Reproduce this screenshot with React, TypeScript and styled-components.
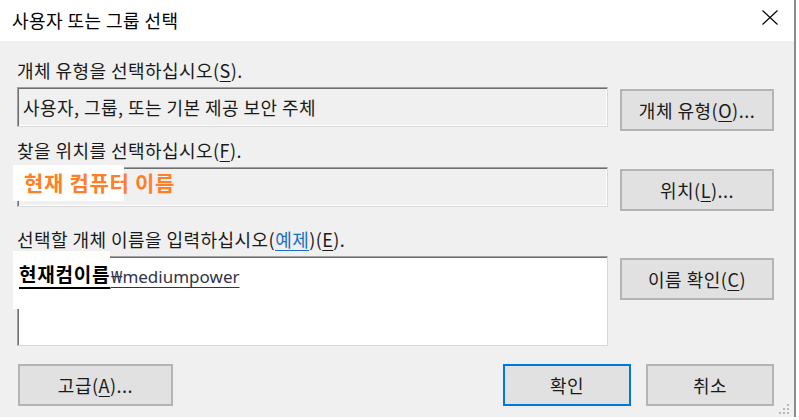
import React from "react";
import styled, { createGlobalStyle } from "styled-components";

const GlobalStyle = createGlobalStyle`
  html, body {
    margin: 0;
    padding: 0;
    background: #ffffff;
  }
  body {
    font-family: "Noto Sans CJK KR", "Noto Sans", sans-serif;
  }
`;

const Window = styled.div`
  position: relative;
  width: 794px;
  height: 417px;
  display: flex;
  flex-direction: column;
  border-right: 2px solid #8c8c8c;
  background: #f0f0f0;
  font-family: "Noto Sans CJK KR", sans-serif;
  color: #1a1a1a;
  letter-spacing: 0.45px;
`;

const TitleBar = styled.div`
  flex: 0 0 41px;
  height: 41px;
  box-sizing: border-box;
  background: #ffffff;
  display: flex;
  align-items: center;
  justify-content: space-between;
  padding: 0 16px 0 12px;
`;

const Title = styled.span`
  font-size: 18px;
  line-height: 24px;
  color: #000;
  margin-top: -2px;
`;

const CloseIcon = styled.svg`
  display: block;
  align-self: flex-start;
  margin-top: 10px;
`;

const Body = styled.div`
  flex: 1;
  display: flex;
  flex-direction: column;
  padding: 0 20px 0 17px;
`;

const Section = styled.div<{ $mt: number }>`
  margin-top: ${(p) => p.$mt}px;
  display: flex;
  flex-direction: column;
`;

const Label = styled.div`
  font-size: 18px;
  line-height: 24px;
  height: 24px;
  margin-bottom: 5px;
  white-space: nowrap;
`;

const Row = styled.div`
  display: flex;
  gap: 12px;
  align-items: flex-start;
`;

const Field = styled.div<{ $multi?: boolean }>`
  box-sizing: border-box;
  flex: 0 0 591px;
  width: 591px;
  height: ${(p) => (p.$multi ? 90 : 40)}px;
  background: ${(p) => (p.$multi ? "#ffffff" : "#f0f0f0")};
  border: 1px solid #a0a0a0;
  border-right-color: #d8d8d8;
  border-bottom-color: #d8d8d8;
  box-shadow: inset 1px 1px 0 #6e6e6e, inset -1px -1px 0 #ffffff;
  display: flex;
  align-items: ${(p) => (p.$multi ? "flex-start" : "center")};
  padding: ${(p) => (p.$multi ? "8px 2px 0" : "0 5px")};
  font-size: 18px;
  line-height: 24px;
  white-space: nowrap;
`;

const Resolved = styled.span<{ $indent: number }>`
  margin-left: ${(p) => p.$indent}px;
  font-family: "Noto Sans", "Noto Sans CJK KR", sans-serif;
  font-size: 17px;
  letter-spacing: 0;
  color: #33334a;
  text-decoration: underline;
  text-underline-offset: 4px;
`;

const Button = styled.button<{ $w: number; $primary?: boolean; $mt?: number }>`
  box-sizing: border-box;
  flex: 0 0 ${(p) => p.$w}px;
  width: ${(p) => p.$w}px;
  height: 42px;
  margin-top: ${(p) => p.$mt ?? 0}px;
  padding: 0;
  background: #e1e1e1;
  border: 2px solid ${(p) => (p.$primary ? "#0078d7" : "#b4b4b4")};
  font-family: "Noto Sans CJK KR", sans-serif;
  font-size: 18px;
  letter-spacing: 0.5px;
  color: #1a1a1a;
  display: flex;
  align-items: center;
  justify-content: center;
  white-space: nowrap;
`;

const Key = styled.span`
  text-decoration: underline;
  text-underline-offset: 3px;
`;

const Link = styled.span`
  color: #1a6fc4;
  text-decoration: underline;
  text-underline-offset: 3px;
`;

const Footer = styled.div`
  margin-top: 18px;
  padding-left: 1px;
  display: flex;
  gap: 15px;
`;

const Spacer = styled.div`
  flex: 1;
`;

const Mask = styled.div<{ $x: number; $y: number; $w: number; $h: number }>`
  position: absolute;
  left: ${(p) => p.$x}px;
  top: ${(p) => p.$y}px;
  width: ${(p) => p.$w}px;
  height: ${(p) => p.$h}px;
  background: #ffffff;
  box-sizing: border-box;
  white-space: nowrap;
`;

const OrangeText = styled.span`
  position: absolute;
  left: 11px;
  top: 3px;
  font-size: 21px;
  line-height: 28px;
  font-weight: 700;
  letter-spacing: 0.7px;
  color: #ff7f27;
`;

const NameText = styled.span`
  position: absolute;
  left: 6px;
  top: 11px;
  font-size: 19px;
  line-height: 24px;
  font-weight: 700;
  letter-spacing: 0.8px;
  color: #000;
  text-decoration: underline;
  text-decoration-thickness: 1.5px;
  text-underline-offset: 5px;
`;

const Grip = styled.svg`
  position: absolute;
  left: 778px;
  top: 403px;
`;

export default function App() {
  return (
    <>
      <GlobalStyle />
      <Window>
        <TitleBar>
          <Title>사용자 또는 그룹 선택</Title>
          <CloseIcon width="16" height="15" viewBox="0 0 16 15">
            <path d="M0.5 0.5 L15.5 14.5 M15.5 0.5 L0.5 14.5" stroke="#000" strokeWidth="1.1" fill="none" />
          </CloseIcon>
        </TitleBar>
        <Body>
          <Section $mt={17}>
            <Label>
              개체 유형을 선택하십시오(<Key>S</Key>).
            </Label>
            <Row>
              <Field>사용자, 그룹, 또는 기본 제공 보안 주체</Field>
              <Button $w={154} $mt={2}>
                개체 유형(<Key>O</Key>)...
              </Button>
            </Row>
          </Section>
          <Section $mt={7}>
            <Label>
              찾을 위치를 선택하십시오(<Key>F</Key>).
            </Label>
            <Row>
              <Field />
              <Button $w={154} $mt={2}>
                위치(<Key>L</Key>)...
              </Button>
            </Row>
          </Section>
          <Section $mt={16}>
            <Label>
              선택할 개체 이름을 입력하십시오(<Link>예제</Link>)(<Key>E</Key>).
            </Label>
            <Row>
              <Field $multi>
                <Resolved $indent={91}>₩mediumpower</Resolved>
              </Field>
              <Button $w={154} $mt={2}>
                이름 확인(<Key>C</Key>)
              </Button>
            </Row>
          </Section>
          <Footer>
            <Button $w={155}>
              고급(<Key>A</Key>)...
            </Button>
            <Spacer />
            <Button $w={128} $primary>
              확인
            </Button>
            <Button $w={128}>취소</Button>
          </Footer>
        </Body>
        <Mask $x={13} $y={165} $w={111} $h={36}>
          <OrangeText>현재 컴퓨터 이름</OrangeText>
        </Mask>
        <Mask $x={13} $y={251} $w={97} $h={58}>
          <NameText>현재컴이름</NameText>
        </Mask>
        <Grip width="13" height="13" viewBox="0 0 13 13">
          <g fill="#b8b8b8">
            <rect x="9" y="1" width="2" height="2" />
            <rect x="5" y="5" width="2" height="2" />
            <rect x="9" y="5" width="2" height="2" />
            <rect x="1" y="9" width="2" height="2" />
            <rect x="5" y="9" width="2" height="2" />
            <rect x="9" y="9" width="2" height="2" />
          </g>
        </Grip>
      </Window>
    </>
  );
}
